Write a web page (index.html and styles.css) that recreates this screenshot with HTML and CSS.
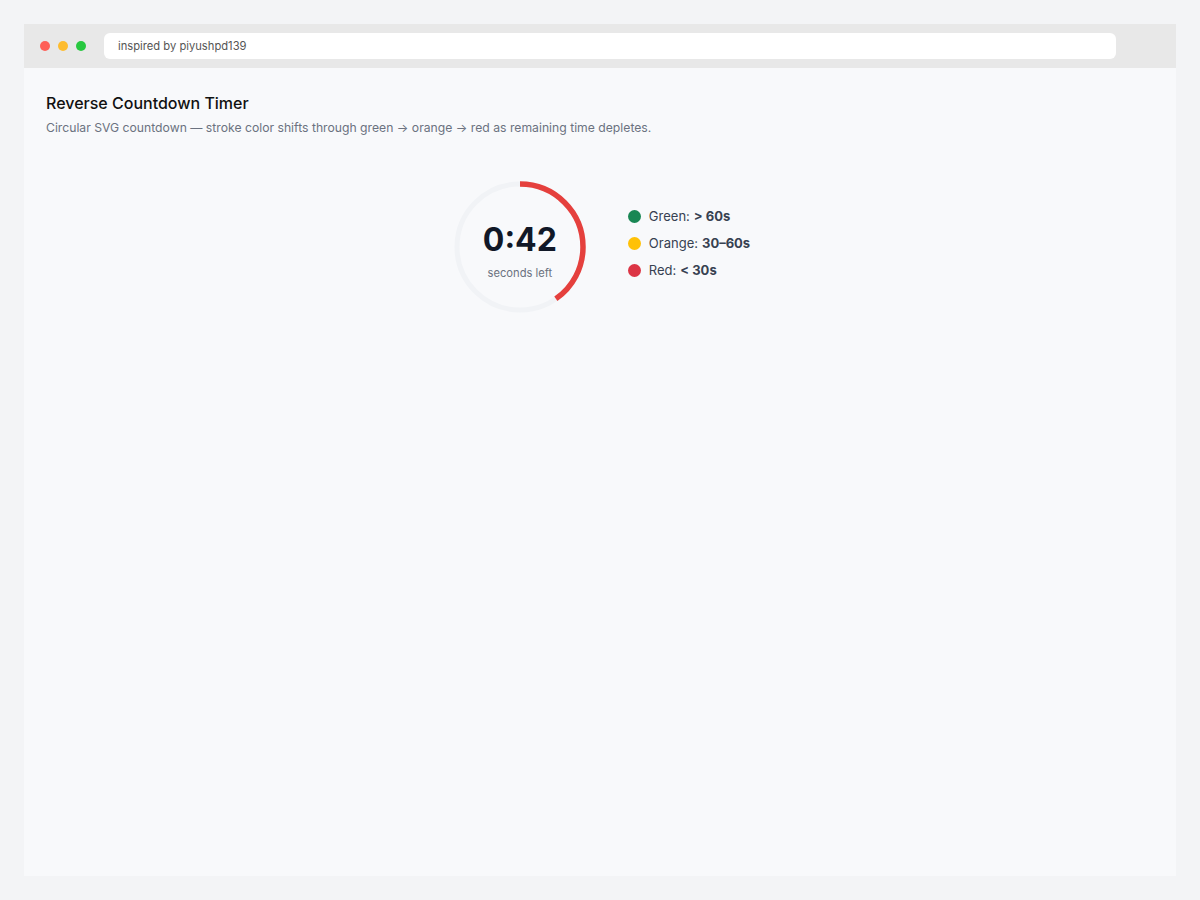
FILE: index.html
```html
<!DOCTYPE html>
<html>
<head>
<meta charset="utf-8">
<link rel="stylesheet" href="styles.css">
</head>
<body>
<div class="window">
  <div class="titlebar">
    <div class="dots">
      <span class="dot red"></span>
      <span class="dot yellow"></span>
      <span class="dot green"></span>
    </div>
    <div class="address">inspired by piyushpd139</div>
  </div>
  <div class="content">
    <h1 class="title">Reverse Countdown Timer</h1>
    <p class="subtitle">Circular SVG countdown — stroke color shifts through green → orange → red as remaining time depletes.</p>
    <div class="timer-row">
      <div class="ring">
        <svg width="140" height="140" viewBox="0 0 140 140">
          <circle cx="70" cy="70" r="63" fill="none" stroke="#f1f3f6" stroke-width="5"/>
          <circle cx="70" cy="70" r="63" fill="none" stroke="#e5403d" stroke-width="5.5"
            stroke-dasharray="159.5 400" transform="rotate(-90 70 70)"/>
        </svg>
        <div class="ring-label">
          <div class="time">0:42</div>
          <div class="unit">seconds left</div>
        </div>
      </div>
      <ul class="legend">
        <li><span class="ldot lgreen"></span>Green: <b>&gt; 60s</b></li>
        <li><span class="ldot lorange"></span>Orange: <b>30–60s</b></li>
        <li><span class="ldot lred"></span>Red: <b>&lt; 30s</b></li>
      </ul>
    </div>
  </div>
</div>
</body>
</html>
```

FILE: styles.css
```css
* { box-sizing: border-box; }
html, body { margin: 0; padding: 0; }
body {
  background: #f3f4f6;
  font-family: Inter, "Liberation Sans", sans-serif;
  padding: 24px;
  height: 900px;
}
.window {
  height: 852px;
  background: #f8f9fb;
  display: flex;
  flex-direction: column;
}
.titlebar {
  height: 44px;
  background: #e8e8e8;
  display: flex;
  align-items: center;
  padding: 0 16px 0 16px;
}
.dots { display: flex; gap: 8px; }
.dot { width: 10px; height: 10px; border-radius: 50%; display: block; }
.dot.red { background: #fe5f57; }
.dot.yellow { background: #febc2e; }
.dot.green { background: #28c840; }
.address {
  margin-left: 18px;
  width: 1012px;
  height: 26px;
  background: #fff;
  border-radius: 6px;
  font-size: 11.2px;
  color: #555;
  line-height: 26px;
  padding-left: 14px;
}
.content {
  padding: 24px 22px;
  flex: 1;
}
.title {
  margin: 0;
  font-size: 16px;
  line-height: 22px;
  font-weight: 500;
  color: #111;
}
.subtitle {
  margin: 4px 0 0;
  font-size: 12.2px;
  line-height: 20px;
  color: #6b7280;
}
.timer-row {
  margin-top: 39px;
  display: flex;
  justify-content: center;
  align-items: center;
  gap: 38px;
}
.ring {
  position: relative;
  width: 140px;
  height: 140px;
}
.ring svg { display: block; }
.ring-label {
  position: absolute;
  inset: 0;
  display: flex;
  flex-direction: column;
  align-items: center;
  padding-top: 43px;
}
.time {
  font-size: 32px;
  font-weight: 700;
  color: #111827;
  line-height: 40px;
}
.unit {
  font-size: 11.2px;
  line-height: 14px;
  color: #6b7280;
  margin-top: 6px;
}
.legend {
  list-style: none;
  margin: 0;
  padding: 0;
  display: flex;
  flex-direction: column;
  gap: 9px;
  margin-top: -8px;
}
.legend li {
  display: flex;
  align-items: center;
  font-size: 13px;
  line-height: 18px;
  color: #374151;
}
.legend b { font-weight: 700; margin-left: 4px; color: #374151; }
.ldot { width: 13px; height: 13px; border-radius: 50%; margin-right: 8px; display: block; }
.lgreen { background: #198754; }
.lorange { background: #ffc107; }
.lred { background: #dc3545; }
```
